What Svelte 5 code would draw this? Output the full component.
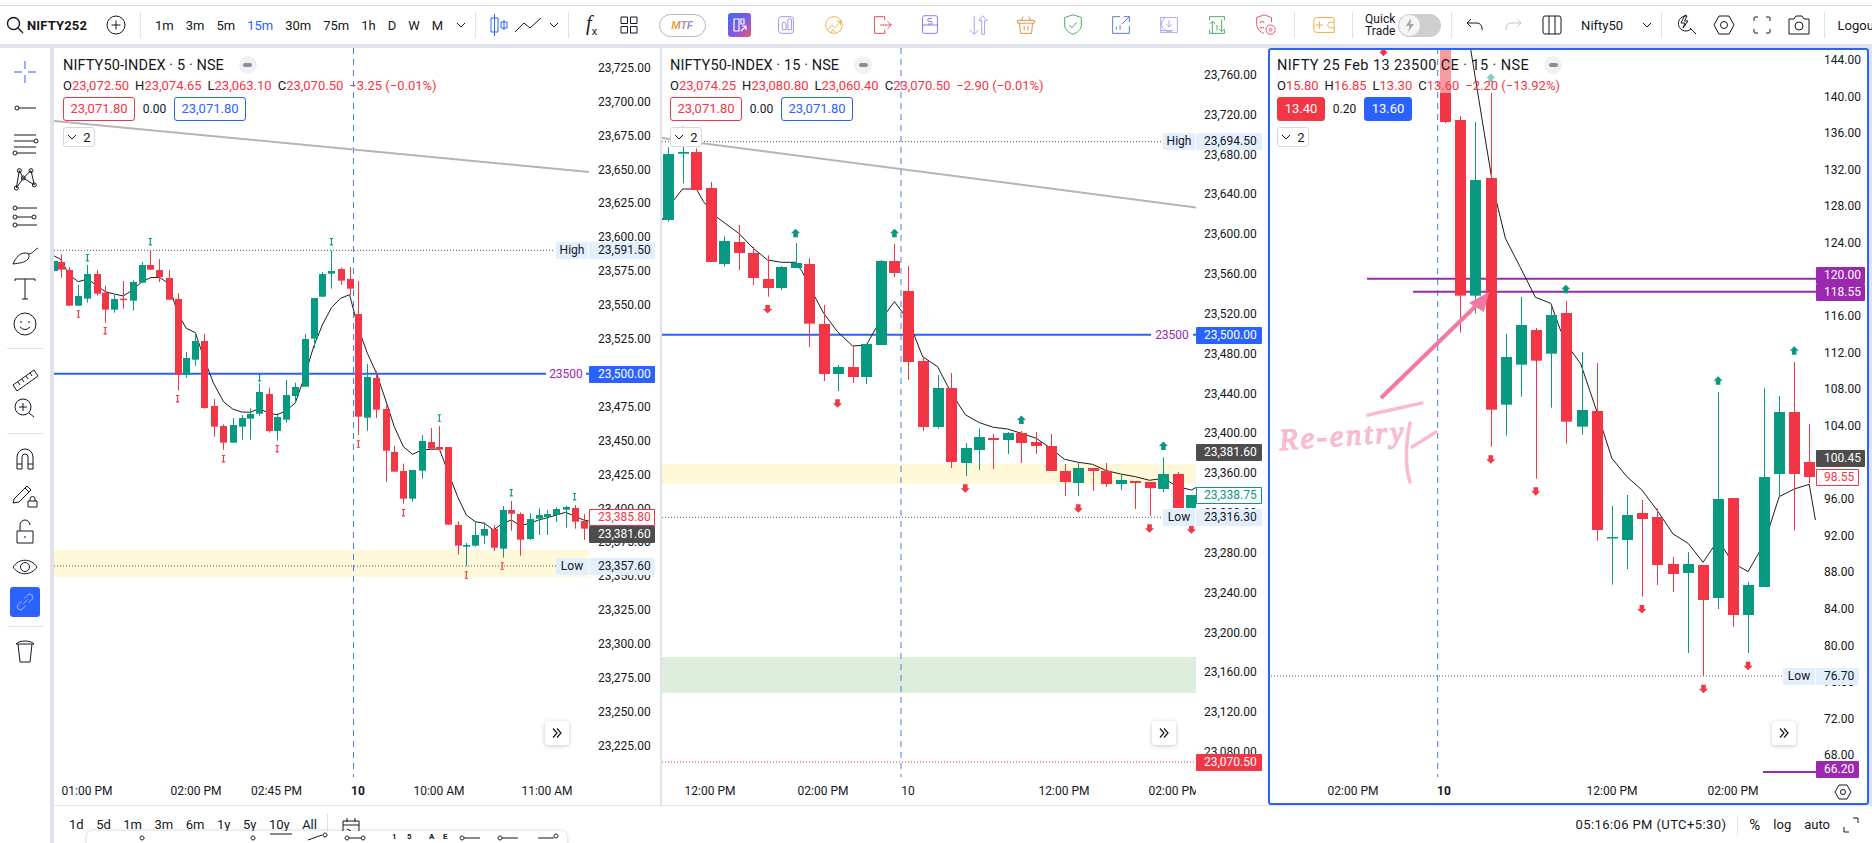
<script>
  const circle = (x, y, r) => `M${x - r} ${y}a${r} ${r} 0 1 0 ${2 * r} 0a${r} ${r} 0 1 0 ${-2 * r} 0Z`;

  const side = {
    cross: 'M3 14h8M17 14h8M14 3v8M14 17v8',
    line: circle(6, 14, 2) + 'M8 14h17',
    chan: 'M3 5h22M3 11h20M3 17h22M6 23h19' + circle(25, 11, 2) + circle(4, 23, 2),
    nodes: 'M5.300 22L8.300 4.600L12.300 12L20 4.600L23.300 18.900L12.300 12L5.300 22' + circle(5.3, 22, 2) + circle(8.3, 4.6, 2) + circle(12.3, 12, 2) + circle(20, 4.6, 2) + circle(23.3, 18.9, 2),
    fib: circle(4, 6, 2) + 'M6 6h20' + circle(4, 15, 2) + circle(23, 15, 2) + 'M6 15h15' + circle(4, 23, 2) + 'M6 23h20',
    brush: 'M2 26C5 19 9 15 14 15C18 15 19 18 17 21C14 25 8 25 2 26ZM16 15C20 18 23 12 27 10',
    text: 'M4 7V5h20v2M14 5v20M11 25h6',
    smile: circle(14, 14, 11) + 'M10 11v2M18 11v2M9 17Q14 22 19 17',
    ruler: 'M2 20L23 5L27 11L6 26ZM7 17l2 3M11 14l2 3M15 11l2 3M19 8l2 3',
    zoom: circle(12, 13, 8) + 'M12 9v8M8 13h8M18 19l5 4',
    magnet: 'M6 25V13a8 8 0 0 1 16 0v12h-5V13a3 3 0 0 0-6 0v12ZM6 20h5M17 20h5',
    penlock: 'M3 18L16 5L20 9L8 21L2 22ZM14 7l4 4M17 20h9v6h-9ZM19 20v-2a2.500 2.500 0 0 1 5 0v2',
    lock: 'M6 14h16v12H6ZM9 14V8a5 5 0 0 1 10 0M14 19v2',
    eye: 'M2 14C8 5 20 5 26 14C20 23 8 23 2 14Z' + circle(14, 14, 4.5),
    link: 'M12 16L17 11M10 13L6 17a3.500 3.500 0 0 0 5 5L15 18M13 10L17 6a3.500 3.500 0 0 1 5 5L18 15',
    trash: 'M5 7H23M7 7L9 25H19L21 7M5 7C8 3 20 3 23 7'
  };

  const gSide1 = ['cross', 'line', 'chan', 'nodes', 'fib', 'brush', 'text', 'smile'];
  const gSide3 = ['lock', 'eye'];

  const tf = ['1m', '3m', '5m', '15m', '30m', '75m', '1h', 'D', 'W', 'M'];
  const ranges = ['1d', '5d', '1m', '3m', '6m', '1y', '5y', '10y', 'All'];

  const tools = [
    { c: '#9b8df2', d: 'M6 8a3 3 0 0 1 3-3h10a3 3 0 0 1 3 3v12a3 3 0 0 1-3 3H9a3 3 0 0 1-3-3ZM10 13a2 2 0 0 1 4 0v6h-4ZM16 9a2 2 0 0 1 4 0v10h-4Z' },
    { c: '#f0a935', d: circle(14, 14, 9) + 'M7 19l5-5l3 3l6-7M17 10h4v4M10 23l3-4l3 3' },
    { c: '#dc4a4a', d: 'M17 9V5H6v18h11v-4M12 14h12M20 10l4 4l-4 4' },
    { c: '#7d6ff0', d: 'M8 4h12a2 2 0 0 1 2 2v8H6V6a2 2 0 0 1 2-2ZM6 14v7a2 2 0 0 0 2 2h12a2 2 0 0 0 2-2v-7M16 7h-3a1 1 0 0 0 0 3h2a1 1 0 0 1 0 3h-3' },
    { c: '#a89cf5', d: 'M10 4v20M5 19l5 5l5-5M18 24V9h-3l4-5l5 5h-3v15Z' },
    { c: '#d98a3a', d: 'M5 9h18v3H5ZM7 12l1 11h12l1-11M9 9l2-4M19 9l-2-4M12 15v5M16 15v5' },
    { c: '#3ea65b', d: 'M14 3l9 3v8c0 5-4 8-9 10c-5-2-9-5-9-10V6ZM10 14l3 3l5-6' },
    { c: '#5272c9', d: 'M13 5H5v18h18v-8M15 13l8-8M17 5h6v6M9 19v-3M13 19v-5' },
    { c: '#aaa2f2', d: 'M5 6h18v16H5ZM10 6a8 8 0 0 0 8 14M14 9v7M11 13l3 3l3-3M5 20h13' },
    { c: '#47a95a', d: 'M6 9V5h16v4M6 19v4h16v-4M9 23V10M6 13l3-3l3 3M19 8v13M16 18l3 3l3-3M14 14v6' },
    { c: '#e24c5d', d: 'M13 3l8 3v5M13 3L5 6v7c0 5 4 9 8 10M9 12a2 2 0 0 1 4 0M8 17h5' + circle(20, 19, 5) + circle(20, 19, 1.5) }
  ];
  const wallet = 'M6 6h17a2 2 0 0 1 2 2v14H6a3 3 0 0 1-3-3V9a3 3 0 0 1 3-3ZM25 11h-4a3 3 0 0 0 0 6h4M5 14h8M9 10v8';

  const PANE_TOP = 48;

  const c1 = [[36,123,153,123,153,'g'],[52,126,149,103,173,'r'],[74,150,257,142,257,'r'],[97,228,257,195,257,'g'],[120,162,236,135,248,'g'],[143,162,221,150,227,'r'],[165,218,269,197,308,'r'],[188,237,269,225,278,'g'],[211,236,239,183,266,'r'],[234,186,242,181,272,'g'],[257,135,188,126,188,'g'],[279,135,149,91,149,'r'],[302,150,171,117,186,'r'],[325,174,239,150,239,'r'],[348,237,464,219,512,'r'],[370,414,464,396,473,'g'],[393,363,419,340,437,'g'],[416,363,564,342,566,'r'],[439,558,620,537,650,'r'],[464,618,668,613,689,'r'],[487,615,668,594,668,'g'],[510,594,620,585,659,'g'],[532,582,596,565,659,'g'],[555,516,581,490,587,'g'],[578,522,633,503,638,'r'],[600,591,633,580,662,'g'],[623,525,599,480,608,'g'],[646,501,528,488,550,'g'],[669,357,500,342,500,'g'],[692,234,356,234,384,'g'],[714,162,230,156,230,'g'],[737,153,161,91,206,'g'],[760,147,182,143,195,'r'],[783,177,206,141,224,'r'],[805,282,590,183,645,'r'],[828,471,593,432,632,'g'],[851,474,569,453,594,'r'],[874,567,692,556,785,'r'],[896,696,755,678,755,'r'],[919,753,836,731,851,'r'],[942,750,836,750,845,'g'],[965,663,752,645,776,'g'],[988,666,686,624,690,'r'],[1010,681,689,618,690,'r'],[1033,681,914,681,914,'r'],[1056,915,977,904,1004,'r'],[1078,975,980,969,1038,'g'],[1101,945,977,903,980,'g'],[1124,927,947,907,972,'g'],[1147,927,983,915,992,'r'],[1170,870,986,858,1013,'g'],[1192,870,881,843,932,'r'],[1215,882,959,877,1007,'r'],[1238,897,957,880,960,'g'],[1261,885,896,865,945,'g'],[1283,882,891,870,945,'g'],[1306,867,885,862,905,'g'],[1329,861,869,857,923,'g'],[1352,864,905,855,926,'r'],[1375,903,926,882,960,'r']];
  const e1 = [[36,108],[52,118],[74,165],[97,185],[120,177],[143,196],[165,215],[188,222],[211,228],[234,210],[257,186],[279,173],[302,172],[325,190],[348,280],[370,325],[393,338],[416,420],[439,490],[464,545],[487,567],[510,576],[532,577],[555,565],[578,580],[600,584],[623,572],[646,548],[669,470],[692,380],[714,315],[737,263],[760,235],[783,224],[805,325],[828,400],[851,460],[874,540],[896,620],[919,680],[942,703],[965,690],[988,688],[1010,687],[1033,760],[1056,830],[1078,885],[1101,905],[1124,910],[1147,930],[1170,910],[1192,900],[1215,917],[1238,910],[1261,900],[1283,893],[1306,885],[1329,877],[1352,888],[1375,900],[1388,903]];
  const m1 = [[120,113,'u'],[279,65,'u'],[555,473,'u'],[737,65,'u'],[1010,594,'u'],[1192,818,'u'],[1352,830,'u'],[97,282,'d'],[165,332,'d'],[348,536,'d'],[464,716,'d'],[600,686,'d'],[805,672,'d'],[919,878,'d'],[1078,1065,'d'],[1169,1038,'d']];

  const c2 = [[21,72,270,52,275,'g'],[57,66,71,40,160,'g'],[92,66,180,55,180,'r'],[128,174,396,156,396,'r'],[163,333,402,319,410,'g'],[199,336,369,285,420,'r'],[236,369,444,350,465,'r'],[272,447,474,376,500,'r'],[307,411,474,408,480,'g'],[343,399,414,339,414,'g'],[378,402,581,384,651,'r'],[414,582,732,525,753,'r'],[449,711,732,705,783,'g'],[487,711,741,648,759,'r'],[522,642,741,642,762,'g'],[558,393,645,390,645,'g'],[593,393,429,342,441,'r'],[628,483,696,408,750,'r'],[664,693,891,678,903,'r'],[702,774,891,735,896,'g'],[737,774,996,729,1014,'r'],[773,954,999,939,1038,'g'],[808,921,960,895,1020,'g'],[843,924,930,912,1017,'r'],[879,909,930,906,972,'g'],[914,909,939,903,999,'r'],[952,936,948,906,972,'r'],[988,948,1023,912,1023,'r'],[1023,1023,1056,1002,1098,'r'],[1058,1014,1059,996,1098,'g'],[1094,1014,1023,1014,1083,'r'],[1129,1023,1062,999,1071,'r'],[1165,1050,1062,1035,1080,'g'],[1202,1053,1059,1053,1137,'r'],[1238,1056,1074,1056,1158,'r'],[1273,1032,1077,982,1086,'g'],[1309,1032,1134,1026,1134,'r'],[1344,1095,1134,1095,1134,'g']];
  const e2 = [[5,270],[35,210],[57,177],[92,177],[110,215],[142,260],[199,310],[236,355],[272,390],[307,397],[343,397],[360,425],[378,470],[414,550],[449,605],[487,648],[522,645],[558,570],[593,515],[628,570],[664,680],[702,710],[737,790],[773,855],[808,878],[843,892],[879,897],[914,910],[952,925],[988,955],[1023,988],[1058,997],[1094,1003],[1129,1022],[1165,1032],[1202,1040],[1238,1051],[1273,1045],[1309,1070],[1344,1080],[1356,1072]];
  const m2 = [[343,310,'U'],[593,310,'U'],[914,870,'U'],[1273,948,'U'],[57,0,'U',0.35],[272,537,'D'],[449,820,'D'],[772,1075,'D'],[1058,1135,'D'],[1238,1195,'D'],[1344,1198,'D']];

  const c3 = [[455,-120,96,-120,100,'r'],[493,90,617,78,728,'r'],[532,270,617,96,670,'g'],[574,264,959,9,1070,'r'],[613,801,944,732,1037,'g'],[652,705,824,621,920,'g'],[691,720,812,714,1166,'r'],[730,675,791,650,953,'g'],[769,669,995,633,1061,'r'],[811,960,1010,786,1034,'g'],[850,963,1320,819,1352,'r'],[889,1341,1344,1248,1484,'g'],[928,1275,1350,1215,1437,'g'],[967,1269,1287,1230,1520,'r'],[1006,1281,1425,1255,1485,'r'],[1048,1422,1452,1401,1506,'r'],[1087,1422,1449,1386,1689,'g'],[1126,1425,1530,1425,1758,'r'],[1165,1227,1524,906,1557,'g'],[1204,1224,1575,1224,1611,'r'],[1243,1485,1575,1476,1689,'g'],[1285,1161,1491,895,1491,'g'],[1324,966,1152,918,1222,'g'],[1363,966,1152,816,1322,'r'],[1402,1116,1161,1002,1180,'r']];
  const e3 = [[522,-120],[560,150],[575,255],[590,340],[612,445],[650,530],[690,622],[730,640],[755,720],[785,785],[808,822],[850,965],[889,1105],[928,1160],[967,1200],[1006,1260],[1048,1332],[1087,1360],[1126,1417],[1165,1350],[1204,1419],[1243,1445],[1285,1360],[1324,1220],[1363,1197],[1402,1183],[1418,1290]];
  const m3 = [[574,-36,'U',0.5],[769,598,'U'],[1165,872,'U'],[1363,782,'U'],[574,1108,'D'],[691,1204,'D'],[967,1557,'D'],[1127,1796,'D'],[1243,1727,'D'],[295,-115,'D']];

  const range = (a, b, step) => { const r = []; for (let p = a; p >= b; p -= step) r.push(p); return r; };
  const fmt = (n) => n.toLocaleString('en-US', { minimumFractionDigits: 2, maximumFractionDigits: 2 });

  const panes = [
    {
      id: 'p1', left: 54, width: 606, chartW: 535, ox: 40, sx: 2.529, oy: 220, bodyW: 7,
      title: 'NIFTY50-INDEX · 5 · NSE', o: '23,072.50', h: '23,074.65', l: '23,063.10', c: '23,070.50', chg: '−3.25 (−0.01%)',
      bid: '23,071.80', spread: '0.00', ask: '23,071.80', boxW: 'wide',
      candles: c1, ema: e1, marks: m1,
      ticks: range(23725, 23225, 25).map((p) => ({ t: fmt(p), y: 67.8 + (23725 - p) * 1.356 })),
      tickLeft: 598,
      vline: 353.5,
      trend: [[54, 121], [590, 172]],
      bands: [{ y1: 550, y2: 577, c: 'yellow' }],
      dotted: [{ y: 250.3, c: 'grey', to: 555 }, { y: 566, c: 'grey', to: 557 }],
      hlines: [{ y: 373.7, c: '#2962ff', x1: 54 }],
      hlabel: { y: 373.7, t: '23500', w: 40 },
      tags: [
        { k: 'lite', y: 242, t: '23,591.50', side: 'High' },
        { k: 'blue', y: 366, t: '23,500.00' },
        { k: 'outred', y: 509, t: '23,385.80' },
        { k: 'dark', y: 526, t: '23,381.60' },
        { k: 'lite', y: 558, t: '23,357.60', side: 'Low' }
      ],
      tagL: 589, tagW: 66,
      times: [[87, '01:00 PM'], [196, '02:00 PM'], [276.5, '02:45 PM'], [358, '10', 1], [439, '10:00 AM'], [547, '11:00 AM']],
      more: 545
    },
    {
      id: 'p2', left: 662, width: 606, chartW: 534, ox: 660, sx: 2.529, oy: 130, bodyW: 11,
      title: 'NIFTY50-INDEX · 15 · NSE', o: '23,074.25', h: '23,080.80', l: '23,060.40', c: '23,070.50', chg: '−2.90 (−0.01%)',
      bid: '23,071.80', spread: '0.00', ask: '23,071.80', boxW: 'wide',
      candles: c2, ema: e2, marks: m2,
      ticks: range(23760, 23080, 40).map((p) => ({ t: fmt(p), y: 75 + (23760 - p) * 0.9956 })),
      tickLeft: 1204,
      vline: 901,
      trend: [[662, 138], [1196, 207.500]],
      bands: [{ y1: 464, y2: 484, c: 'yellow' }, { y1: 657, y2: 693, c: 'green' }],
      dotted: [{ y: 141.7, c: 'grey', to: 1162 }, { y: 517.3, c: 'grey', to: 1164 }, { y: 762, c: 'red', to: 1196 }],
      hlines: [{ y: 334.7, c: '#2962ff', x1: 662 }],
      hlabel: { y: 334.7, t: '23500', w: 42 },
      tags: [
        { k: 'lite', y: 133, t: '23,694.50', side: 'High' },
        { k: 'blue', y: 327, t: '23,500.00' },
        { k: 'dark', y: 444, t: '23,381.60' },
        { k: 'outgreen', y: 487, t: '23,338.75' },
        { k: 'lite', y: 509, t: '23,316.30', side: 'Low' },
        { k: 'red', y: 754, t: '23,070.50' }
      ],
      tagL: 1196, tagW: 66,
      times: [[710, '12:00 PM'], [823, '02:00 PM'], [908, '10'], [1064, '12:00 PM'], [1174, '02:00 PM']],
      more: 1152
    },
    {
      id: 'p3', left: 1268, width: 601, chartW: 548, ox: 1270, sx: 2.6, oy: 90, bodyW: 11, active: true,
      title: 'NIFTY 25 Feb 13 23500 CE · 15 · NSE', o: '15.80', h: '16.85', l: '13.30', c: '13.60', chg: '−2.20 (−13.92%)',
      bid: '13.40', spread: '0.20', ask: '13.60', boxW: 'narrow',
      candles: c3, ema: e3, marks: m3,
      ticks: range(144, 68, 4).map((p) => ({ t: fmt(p), y: 60 + (144 - p) * 9.15 })),
      tickLeft: 1824,
      vline: 1437.700,
      bands: [],
      dotted: [{ y: 676, c: 'grey', to: 1784 }],
      hlines: [{ y: 278.7, c: '#9c27b0', x1: 1367 }, { y: 291.7, c: '#9c27b0', x1: 1413 }, { y: 772, c: '#9c27b0', x1: 1763 }],
      tags: [
        { k: 'purple wide', y: 267, t: '120.00' },
        { k: 'purple wide', y: 283.700, t: '118.55' },
        { k: 'dark wide', y: 450, t: '100.45' },
        { k: 'outred', y: 468.700, t: '98.55' },
        { k: 'lite', y: 668, t: '76.70', side: 'Low' },
        { k: 'purple', y: 761, t: '66.20' }
      ],
      tagL: 1816, tagW: 43,
      times: [[1353, '02:00 PM'], [1444, '10', 1], [1612, '12:00 PM'], [1733, '02:00 PM']],
      more: 1772
    }
  ];

  const px = (p, X) => p.ox + X / p.sx - p.left;
  const py = (p, Y) => p.oy + Y / 3 - PANE_TOP;
  const line = (p) => p.ema.map(([X, Y]) => `${px(p, X).toFixed(1)},${py(p, Y).toFixed(1)}`).join(' ');
  const upArrow = 'M0-4.500L4.500 0H2.300V4H-2.300V0H-4.500Z';
  const markPath = 'M-2 -4H2M0 -4V4M-2 4H2';
</script>

{#snippet ic(d, cls = '', size = 28)}
  <svg class="ic {cls}" width={size} height={size} viewBox="0 0 28 28" aria-hidden="true"><path {d} /></svg>
{/snippet}

{#snippet tsep()}<span class="tsep"></span>{/snippet}

<div class="root">
  <div class="topline"></div>
  <header class="toolbar">
    <svg class="ic search" width="20" height="20" viewBox="0 0 20 20"><path d="M13 13l5 5M14.500 8.500a6 6 0 1 1-12 0a6 6 0 1 1 12 0Z" /></svg>
    <span class="sym">NIFTY252</span>
    <svg class="ic plus" width="20" height="20" viewBox="0 0 20 20"><path d="M10 5.500v9M5.500 10h9M19 10a9 9 0 1 1-18 0a9 9 0 1 1 18 0Z" /></svg>
    {@render tsep()}
    <div class="tfs">
      {#each tf as t}<span class="tf" class:on={t === '15m'}>{t}</span>{/each}
    </div>
    <svg class="ic chev" width="10" height="6" viewBox="0 0 10 6"><path d="M1 1l4 4l4-4" /></svg>
    {@render tsep()}
    <svg class="ic blue-ic" width="22" height="28" viewBox="0 0 22 28"><path d="M7.500 3v22M4 7h7v14H4ZM17 9v10M14 11h6v6h-6Z" /></svg>
    <svg class="ic lineic" width="28" height="28" viewBox="0 0 28 28"><path d="M1 21L10 12L16 17L27 7" /></svg>
    <svg class="ic chev chev2" width="10" height="6" viewBox="0 0 10 6"><path d="M1 1l4 4l4-4" /></svg>
    {@render tsep()}
    <span class="fx"><i>f</i><sub>x</sub></span>
    <svg class="ic gridic" width="18" height="18" viewBox="0 0 18 18"><path d="M1 1h6.500v6.500H1ZM10.500 1H17v6.500h-6.500ZM1 10.500h6.500V17H1ZM10.500 10.500H17V17h-6.500Z" /></svg>
    <span class="mtf"><span>MTF</span></span>
    <span class="gradbtn"><svg width="18" height="18" viewBox="0 0 18 18"><path d="M3 3h5v12H3ZM10 3h3v5h-3ZM10 15l5-5M11 10h4v4" /></svg></span>
    <div class="tools">
      {#each tools as t}
        <span class="tool"><svg class="ic" style:stroke={t.c} width="26" height="26" viewBox="0 0 28 28"><path d={t.d} /></svg></span>
      {/each}
    </div>
    {@render tsep()}
    <svg class="ic walletic" width="26" height="26" viewBox="0 0 28 28"><path d={wallet} /></svg>
    {@render tsep()}
    <span class="quick">Quick<br />Trade</span>
    <span class="toggle"><span class="knob"><svg width="12" height="16" viewBox="0 0 12 16"><path d="M7 1L2 9h3.500L4 15l6-8H6.500Z" /></svg></span></span>
    {@render tsep()}
    <svg class="ic undo" width="20" height="20" viewBox="0 0 20 20"><path d="M6 4L2 8l4 4M2 8h10a5 5 0 0 1 5 5v2" /></svg>
    <svg class="ic undo redo" width="20" height="20" viewBox="0 0 20 20"><path d="M14 4l4 4l-4 4M18 8H8a5 5 0 0 0-5 5v2" /></svg>
    <svg class="ic cols" width="20" height="20" viewBox="0 0 20 20"><path d="M3 1h14a2 2 0 0 1 2 2v14a2 2 0 0 1-2 2H3a2 2 0 0 1-2-2V3a2 2 0 0 1 2-2ZM7 1v18M13 1v18" /></svg>
    <span class="layout">Nifty50</span>
    <svg class="ic chev chev3" width="10" height="6" viewBox="0 0 10 6"><path d="M1 1l4 4l4-4" /></svg>
    {@render tsep()}
    <svg class="ic r1" width="22" height="22" viewBox="0 0 22 22"><path d="M11 2a7.500 7.500 0 1 0 5 13M10 1L6 9h4l-2 5l5-7H9.500L12 2ZM15 14l6 6" /></svg>
    <svg class="ic r2" width="22" height="22" viewBox="0 0 22 22"><path d="M6 2h10l5 9l-5 9H6l-5-9Z M14.500 11a3.500 3.500 0 1 1-7 0a3.500 3.500 0 1 1 7 0Z" /></svg>
    <svg class="ic r3" width="18" height="18" viewBox="0 0 18 18"><path d="M1 5V2a1 1 0 0 1 1-1h3M13 1h3a1 1 0 0 1 1 1v3M17 13v3a1 1 0 0 1-1 1h-3M5 17H2a1 1 0 0 1-1-1v-3" /></svg>
    <svg class="ic r4" width="22" height="20" viewBox="0 0 22 20"><path d="M1 4h5l2-3h6l2 3h5v15H1ZM15 11a4 4 0 1 1-8 0a4 4 0 1 1 8 0Z" /></svg>
    {@render tsep()}
    <span class="logout">Logout</span>
  </header>

  <div class="main">
    <aside class="sidebar">
      {#each gSide1 as k}
        <span class="sbtn">{@render ic(side[k], k === 'cross' ? 'bluei' : '')}</span>
      {/each}
      <span class="hsep first"></span>
      <span class="sbtn">{@render ic(side.ruler)}</span>
      <span class="sbtn short">{@render ic(side.zoom)}</span>
      <span class="hsep second"></span>
      <span class="sbtn">{@render ic(side.magnet)}</span>
      <span class="sbtn tight">{@render ic(side.penlock)}</span>
      {#each gSide3 as k}
        <span class="sbtn">{@render ic(side[k])}</span>
      {/each}
      <span class="sbtn linkbtn">{@render ic(side.link, 'linki', 24)}</span>
      <span class="hsep third"></span>
      <span class="sbtn">{@render ic(side.trash)}</span>
    </aside>

    <div class="workspace">
      <div class="panes">
        {#each panes as p (p.id)}
          <section class="pane {p.id}">
            <svg class="chart" width={p.chartW} height="757" viewBox="0 0 {p.chartW} 757" aria-hidden="true">
              {#each p.bands as b}
                <rect class="band {b.c}" x="0" y={b.y1 - PANE_TOP} width={p.chartW} height={b.y2 - b.y1} />
              {/each}
              <line class="vdash" x1={p.vline - p.left} x2={p.vline - p.left} y1="0" y2="729" />
              {#each p.dotted as d}
                <line class="dot {d.c}" x1="0" x2={d.to - p.left} y1={d.y - PANE_TOP} y2={d.y - PANE_TOP} />
              {/each}
              {#if p.trend}
                <line class="trend" x1={p.trend[0][0] - p.left} y1={p.trend[0][1] - PANE_TOP} x2={p.trend[1][0] - p.left} y2={p.trend[1][1] - PANE_TOP} />
              {/if}
              {#each p.hlines as h}
                <line class="hline" style:stroke={h.c} x1={h.x1 - p.left} x2={p.chartW} y1={h.y - PANE_TOP} y2={h.y - PANE_TOP} />
              {/each}
              <polyline class="ema" points={line(p)} />
              <g class="candles">
                {#each p.candles as [X, bT, bB, wT, wB, c]}
                  {@const cx = Math.round(px(p, X))}
                  <rect class={c} x={cx} y={py(p, wT)} width="1" height={(wB - wT) / 3} />
                  <rect class={c} x={cx - (p.bodyW - 1) / 2} y={py(p, bT)} width={p.bodyW} height={Math.max((bB - bT) / 3, 1.5)} />
                {/each}
              </g>
              {#each p.marks as [X, Y, k, op]}
                <g transform="translate({px(p, X).toFixed(1)} {py(p, Y).toFixed(1)})" opacity={op ?? 1}>
                  {#if k === 'U'}
                    <path class="g" d={upArrow} />
                  {:else if k === 'D'}
                    <path class="r" d={upArrow} transform="scale(1 -1)" />
                  {:else}
                    <path class="tiny {k === 'u' ? 'gs' : 'rs'}" d={markPath} transform="scale(0.8)" />
                  {/if}
                </g>
              {/each}
              {#if p.active}
                <rect class="veil" x="171" y="2" width="12" height="43" />
                <path class="pinkline" d="M113 350L215 251" />
                <path class="pinkhead" d="M221 244L201 255L216 264Z" />
                <path class="pinkscribble" d="M100 367L154 355M144 399L168 384M142 375C138 395 136 415 142 434" />
                <text class="pinktext" x="12" y="402" transform="rotate(-4 12 402)">Re-entry</text>
              {/if}
            </svg>

            {#each p.ticks as t}
              <span class="tick" style:top="{t.y - PANE_TOP - 8}px" style:left="{p.tickLeft - p.left}px">{t.t}</span>
            {/each}
            {#if p.hlabel}
              <span class="hlabel" style:top="{p.hlabel.y - PANE_TOP - 8}px" style:left="{p.chartW - p.hlabel.w - 3}px" style:width="{p.hlabel.w}px">{p.hlabel.t}</span>
            {/if}
            {#each p.tags as g}
              <span class="tag {g.k}" style:top="{g.y - PANE_TOP}px" style:left="{p.tagL - p.left}px" style:width="{p.tagW}px">
                <span class="tagtxt" style:left="{p.tickLeft - p.tagL}px">{g.t}</span>
              </span>
              {#if g.side}
                <span class="sidelabel" style:top="{g.y - PANE_TOP}px" style:left="{p.tagL - p.left - 33}px">{g.side}</span>
              {/if}
            {/each}

            <div class="legend {p.boxW}">
              <div class="ltitle"><span>{p.title}</span><span class="pill"><i></i></span></div>
              <div class="lohlc">
                <span><b>O</b>{p.o}</span><span><b>H</b>{p.h}</span><span><b>L</b>{p.l}</span><span><b>C</b>{p.c}</span><span>{p.chg}</span>
              </div>
              <div class="lquote">
                <span class="qbox qred" class:solid={p.active}>{p.bid}</span>
                <span class="spread">{p.spread}</span>
                <span class="qbox qblue" class:solid={p.active}>{p.ask}</span>
              </div>
              <div class="lcount"><svg width="10" height="6" viewBox="0 0 10 6"><path d="M1 1l4 4l4-4" /></svg>2</div>
            </div>

            <div class="times" style:width="{p.chartW}px">
              {#each p.times as [x, t, bold]}
                <span class="time" class:strong={bold} style:left="{x - p.left}px">{t}</span>
              {/each}
            </div>

            <span class="more" style:left="{p.more - p.left}px"><svg width="12" height="12" viewBox="0 0 12 12"><path d="M2 1.500L6 6L2 10.500M6 1.500L10 6L6 10.500" /></svg></span>
            {#if p.active}
              <svg class="ic gear" width="18" height="18" viewBox="0 0 18 18"><path d="M5 2h8l4 7l-4 7H5L1 9ZM11.500 9a2.500 2.500 0 1 1-5 0a2.500 2.500 0 1 1 5 0Z" /></svg>
              <span class="focus"></span>
            {/if}
          </section>
        {/each}
      </div>

      <footer class="bottom">
        <div class="ranges">
          {#each ranges as r}<span>{r}</span>{/each}
        </div>
        <span class="bsep"></span>
        <svg class="ic cal" width="18" height="18" viewBox="0 0 18 18"><path d="M1 4h16v13H1ZM1 8h16M5 1v4M13 1v4M5 12l4 2" /></svg>
        <div class="spacer"></div>
        <span class="clock">05:16:06 PM (UTC+5:30)</span>
        <span class="bsep b2"></span>
        <span class="opt pct">%</span>
        <span class="opt">log</span>
        <span class="opt">auto</span>
        <svg class="ic full" width="16" height="16" viewBox="0 0 16 16"><path d="M10 1h5v5M1 10v5h5" /></svg>

        <div class="float">
          <svg class="ic" width="480" height="13" viewBox="0 0 480 13">
            <path d="M55 5a2 2 0 1 0 .1 0M166 5a2 2 0 1 0 .1 0M183 3h22M221 9L235 4M238 2a2 2 0 1 0 .1 0M260 5a2 2 0 1 0 .1 0M262 7h12M276 5a2 2 0 1 0 .1 0M375 5a2 2 0 1 0 .1 0M377 7h16M413 5a2 2 0 1 0 .1 0M415 7h16M451 7h16M469 3a2 2 0 1 0 .1 0" />
          </svg>
          <span class="ft a">1</span><span class="ft b">5</span><span class="ft c">A</span><span class="ft d">E</span>
        </div>
      </footer>
    </div>
  </div>
</div>

<style>
  :global(body) {
    margin: 0;
    background: #fff;
    overflow: hidden;
  }
  .root {
    width: 1872px;
    height: 843px;
    display: flex;
    flex-direction: column;
    overflow: hidden;
    background: #e0e3eb;
    font-family: Roboto, "Liberation Sans", sans-serif;
    color: #131722;
  }
  .topline {
    height: 5px;
    background: #fff;
    border-bottom: 1px solid #d6d6d6;
    flex: none;
  }
  .toolbar {
    height: 38px;
    flex: none;
    display: flex;
    align-items: center;
    background: #fff;
    font-size: 13px;
    overflow: hidden;
    white-space: nowrap;
    margin-bottom: 4px;
  }
  .toolbar > * {
    flex: none;
  }
  .ic {
    fill: none;
    stroke: #131722;
    stroke-width: 1;
    flex: none;
    display: block;
  }
  .search {
    margin-left: 5px;
    stroke-width: 1.4;
  }
  .sym {
    font-weight: 700;
    font-size: 13px;
    margin-left: 2px;
    letter-spacing: 0.15px;
    width: 62px;
  }
  .plus {
    margin-left: 17px;
  }
  .tsep {
    width: 1px;
    height: 26px;
    background: #e0e3eb;
    flex: none;
  }
  .plus + .tsep {
    margin-left: 14px;
  }
  .tfs {
    display: flex;
    gap: 12px;
    margin-left: 14px;
  }
  .tf.on {
    color: #2962ff;
  }
  .chev {
    margin-left: 13px;
  }
  .chev + .tsep {
    margin-left: 9px;
  }
  .blue-ic {
    stroke: #2962ff;
    margin-left: 11px;
  }
  .lineic {
    margin-left: 5px;
  }
  .chev2 {
    margin-left: 7px;
  }
  .fx {
    font-family: "Liberation Serif", serif;
    font-size: 20px;
    margin-left: 17px;
    width: 18px;
    line-height: 1;
  }
  .fx sub {
    font-size: 11px;
    font-family: Roboto, sans-serif;
  }
  .gridic {
    margin-left: 16px;
  }
  .mtf {
    margin-left: 20.500px;
    width: 47px;
    height: 23px;
    border: 1px solid #b2b5be;
    border-radius: 12px;
    box-sizing: border-box;
    display: flex;
    align-items: center;
    justify-content: center;
    font-size: 11px;
    font-weight: 700;
    font-style: italic;
  }
  .mtf span {
    background: linear-gradient(90deg, #f5a623, #8f7cf0);
    -webkit-background-clip: text;
    background-clip: text;
    color: transparent;
  }
  .gradbtn {
    margin-left: 22.500px;
    width: 23px;
    height: 24px;
    border-radius: 3px;
    background: linear-gradient(135deg, #3f67f2, #8a5ae0 60%, #f0556a);
    display: flex;
    align-items: center;
    justify-content: center;
  }
  .gradbtn svg {
    fill: none;
    stroke: #fff;
    stroke-width: 1.2;
  }
  .tools {
    display: flex;
    margin-left: 22px;
    width: 505px;
    justify-content: space-between;
  }
  .tool {
    width: 26px;
    display: flex;
    justify-content: center;
  }
  .tools + .tsep {
    margin-left: 16px;
  }
  .walletic {
    margin-left: 16px;
    stroke: #f5a53a;
  }
  .walletic + .tsep {
    margin-left: 15px;
  }
  .quick {
    font-size: 12px;
    line-height: 12.500px;
    margin-left: 12px;
    width: 33px;
  }
  .toggle {
    width: 43px;
    height: 23px;
    border-radius: 12px;
    background: #cfcfcf;
    display: flex;
    align-items: center;
    padding-left: 1px;
    box-sizing: border-box;
  }
  .knob {
    width: 21px;
    height: 21px;
    border-radius: 50%;
    background: #f5f5f5;
    display: flex;
    align-items: center;
    justify-content: center;
  }
  .knob svg {
    fill: #a6a6a6;
  }
  .toggle + .tsep {
    margin-left: 10px;
  }
  .undo {
    margin-left: 13px;
  }
  .redo {
    margin-left: 18px;
    stroke: #c4c6cc;
  }
  .cols {
    margin-left: 19px;
  }
  .layout {
    margin-left: 19px;
    font-size: 13px;
    width: 45px;
  }
  .chev3 {
    margin-left: 16px;
  }
  .r1 {
    margin-left: 13px;
  }
  .r2 {
    margin-left: 16px;
  }
  .r3 {
    margin-left: 17.500px;
  }
  .r4 {
    margin-left: 17.500px;
  }
  .r4 + .tsep {
    margin-left: 13.500px;
  }
  .logout {
    margin-left: 13px;
    font-size: 13px;
  }
  .main {
    flex: 1;
    display: flex;
    min-height: 0;
    gap: 4px;
  }
  .sidebar {
    width: 50px;
    flex: none;
    background: #fff;
    display: flex;
    flex-direction: column;
    align-items: center;
    padding-top: 6px;
    box-sizing: border-box;
  }
  .sbtn {
    height: 36px;
    width: 30px;
    flex: none;
    display: flex;
    align-items: center;
    justify-content: center;
  }
  .sbtn.short {
    height: 22px;
  }
  .sbtn.tight {
    margin-top: 1px;
  }
  .hsep {
    width: 36px;
    height: 1px;
    background: #e0e3eb;
    flex: none;
  }
  .hsep.first {
    margin: 6px 0 12px;
  }
  .hsep.second {
    margin: 14px 0 6px;
  }
  .hsep.third {
    margin: 9px 0 6px;
  }
  .linkbtn {
    height: 30px;
    background: #2962ff;
    border-radius: 3px;
    margin-top: 2px;
  }
  :global(.linki) {
    stroke: #b8ccff !important;
  }
  :global(.bluei) {
    stroke: #2962ff !important;
  }
  .workspace {
    flex: 1;
    min-width: 0;
    display: flex;
    flex-direction: column;
  }
  .panes {
    height: 757px;
    flex: none;
    display: flex;
    gap: 2px;
    padding-right: 3px;
  }
  .pane {
    position: relative;
    height: 757px;
    background: #fff;
    overflow: hidden;
    flex: none;
  }
  .p1, .p2 {
    width: 606px;
  }
  .p2 {
    margin-right: -2px;
  }
  .p3 {
    width: 601px;
  }
  .chart {
    position: absolute;
    left: 0;
    top: 0;
    display: block;
  }
  .band.yellow {
    fill: #fff9d9;
  }
  .band.green {
    fill: #ddeedd;
  }
  .vdash {
    stroke: #4a7fe0;
    stroke-width: 1;
    stroke-dasharray: 6 5;
  }
  .dot {
    stroke-width: 1;
    stroke-dasharray: 1 2;
  }
  .dot.grey {
    stroke: #555;
  }
  .dot.red {
    stroke: #f23645;
  }
  .trend {
    stroke: #b5b5b5;
    stroke-width: 2;
  }
  .hline {
    stroke-width: 2;
  }
  .ema {
    fill: none;
    stroke: #1c1c1c;
    stroke-width: 1;
  }
  .g {
    fill: #089981;
  }
  .r {
    fill: #f23645;
  }
  .tiny {
    fill: none;
    stroke-width: 1.4;
  }
  .gs {
    stroke: #089981;
  }
  .rs {
    stroke: #f23645;
  }
  .veil {
    fill: #fff;
    opacity: 0.5;
  }
  .pinkline {
    stroke: #f4789f;
    stroke-width: 4;
    fill: none;
  }
  .pinkhead {
    fill: #f4789f;
  }
  .pinkscribble {
    stroke: #f8bbd0;
    stroke-width: 3.500;
    stroke-linecap: round;
    fill: none;
  }
  .pinktext {
    font-family: "Liberation Serif", serif;
    font-style: italic;
    font-size: 30px;
    letter-spacing: 3px;
    fill: #f8bbd0;
    stroke: #f8bbd0;
    stroke-width: 1.4;
  }
  .tick {
    position: absolute;
    font-size: 12px;
    line-height: 16px;
    color: #131722;
  }
  .hlabel {
    position: absolute;
    background: #fff;
    font-size: 12px;
    line-height: 16px;
    color: #9c27b0;
    text-align: center;
  }
  .tag {
    position: absolute;
    height: 17px;
    box-sizing: border-box;
    font-size: 12px;
    line-height: 17px;
    border-radius: 1px;
  }
  .tagtxt {
    position: absolute;
    top: 0;
    white-space: nowrap;
  }
  .tag.lite {
    background: #e3effd;
    color: #131722;
  }
  .tag.blue {
    background: #2962ff;
    color: #fff;
  }
  .tag.dark {
    background: #4d4d4d;
    color: #fff;
  }
  .tag.red {
    background: #f23645;
    color: #fff;
  }
  .tag.purple {
    background: #9c27b0;
    color: #fff;
  }
  .tag.wide {
    width: 49px !important;
  }
  .tag.outred {
    background: #fff;
    color: #f23645;
    box-shadow: inset 0 0 0 1px #f23645;
  }
  .tag.outgreen {
    background: #fff;
    color: #089981;
    box-shadow: inset 0 0 0 1px #089981;
  }
  .sidelabel {
    position: absolute;
    width: 32px;
    height: 17px;
    background: #e3effd;
    font-size: 12px;
    line-height: 17px;
    text-align: center;
    border-radius: 1px;
  }
  .legend {
    position: absolute;
    left: 9px;
    top: 7px;
    white-space: nowrap;
  }
  .p2 .legend {
    left: 8px;
  }
  .ltitle {
    display: flex;
    align-items: center;
    height: 20px;
    font-size: 14.500px;
    letter-spacing: 0.1px;
    gap: 15px;
  }
  .p3 .ltitle {
    letter-spacing: 0.4px;
  }
  .pill {
    width: 18px;
    height: 18px;
    border-radius: 50%;
    background: #f0f1f4;
    display: flex;
    align-items: center;
    justify-content: center;
  }
  .pill i {
    width: 9px;
    height: 4px;
    border-radius: 2px;
    background: #8a8d96;
  }
  .lohlc {
    display: flex;
    gap: 6px;
    height: 20px;
    align-items: center;
    font-size: 13px;
    color: #f23645;
  }
  .lohlc b {
    font-weight: 400;
    color: #131722;
  }
  .lquote {
    display: flex;
    align-items: center;
    margin-top: 2px;
    height: 24px;
  }
  .qbox {
    height: 24px;
    width: 72px;
    box-sizing: border-box;
    border: 1px solid;
    border-radius: 3px;
    text-align: center;
    font-size: 13px;
    line-height: 22px;
  }
  .narrow .qbox {
    width: 48px;
  }
  .qred {
    color: #f23645;
    border-color: #f23645;
  }
  .qblue {
    color: #2962ff;
    border-color: #2962ff;
  }
  .qred.solid {
    background: #f23645;
    color: #fff;
  }
  .qblue.solid {
    background: #2962ff;
    border-color: #2962ff;
    color: #fff;
  }
  .spread {
    width: 39px;
    text-align: center;
    font-size: 12px;
  }
  .lcount {
    margin-top: 6px;
    width: 32px;
    height: 20px;
    box-sizing: border-box;
    background: #fff;
    border: 1px solid #d6d8de;
    border-radius: 3px;
    display: flex;
    align-items: center;
    justify-content: center;
    gap: 6px;
    font-size: 13px;
  }
  .lcount svg {
    fill: none;
    stroke: #131722;
  }
  .times {
    position: absolute;
    left: 0;
    top: 734px;
    height: 18px;
    overflow: hidden;
  }
  .time {
    position: absolute;
    top: 0;
    transform: translateX(-50%);
    font-size: 12px;
    line-height: 18px;
    white-space: nowrap;
  }
  .time.strong {
    font-weight: 700;
  }
  .more {
    position: absolute;
    top: 673px;
    width: 24px;
    height: 24px;
    background: #fff;
    border-radius: 3px;
    box-shadow: 0 1px 4px rgba(0, 0, 0, 0.22);
    display: flex;
    align-items: center;
    justify-content: center;
  }
  .more svg {
    fill: none;
    stroke: #131722;
    stroke-width: 1.2;
  }
  .gear {
    position: absolute;
    left: 566px;
    top: 735px;
  }
  .focus {
    position: absolute;
    inset: 0;
    border: 2px solid #2962ff;
    border-radius: 3px;
    pointer-events: none;
  }
  .bottom {
    height: 38px;
    flex: none;
    background: #fff;
    display: flex;
    align-items: center;
    position: relative;
    font-size: 13px;
    margin-top: 0;
    border-top: 1px solid #e0e3eb;
    box-sizing: border-box;
  }
  .ranges {
    display: flex;
    gap: 12.500px;
    margin-left: 15px;
  }
  .bsep {
    width: 1px;
    height: 20px;
    margin-left: 10px;
    background: #e0e3eb;
    align-self: flex-start;
    margin-top: 8px;
  }
  .cal {
    margin-left: 14px;
    align-self: flex-start;
    margin-top: 11px;
  }
  .spacer {
    flex: 1;
  }
  .clock {
    font-size: 13px;
    letter-spacing: 0.4px;
  }
  .bsep.b2 {
    margin-left: 11px;
    margin-top: 9px;
  }
  .opt {
    margin-left: 13px;
  }
  .pct {
    font-size: 15px;
    margin-left: 11px;
  }
  .full {
    margin-left: 13px;
    margin-right: 13px;
  }
  .float {
    position: absolute;
    left: 33px;
    top: 25px;
    width: 480px;
    height: 20px;
    background: #fff;
    border-radius: 6px;
    box-shadow: 0 0 4px rgba(0, 0, 0, 0.2);
  }
  .ft {
    position: absolute;
    top: 1px;
    font-size: 8px;
    font-weight: 700;
    line-height: 10px;
  }
  .ft.a {
    left: 305px;
  }
  .ft.b {
    left: 320px;
  }
  .ft.c {
    left: 342px;
  }
  .ft.d {
    left: 356px;
  }
</style>
